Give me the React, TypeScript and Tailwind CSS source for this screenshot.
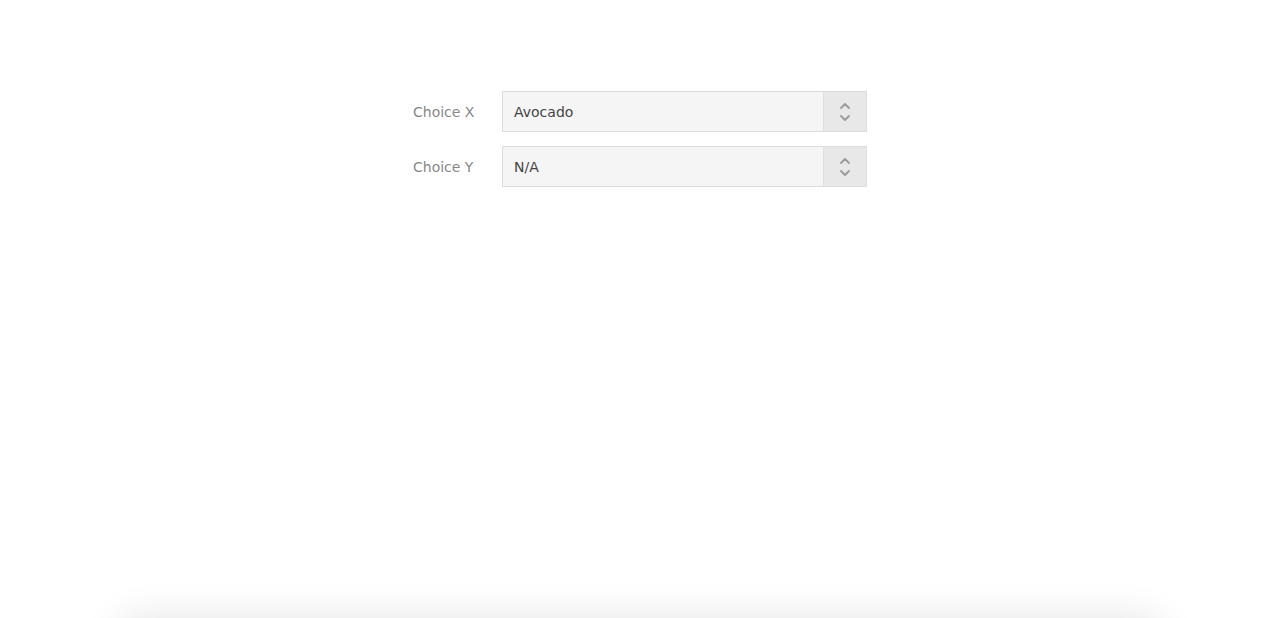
import React from "react"

const font = { fontFamily: '"DejaVu Sans", Verdana, sans-serif' }

function Chevrons() {
  return (
    <svg width="12" height="22" viewBox="0 0 12 22" fill="none" stroke="#9a9a9a" strokeWidth="1.8" strokeLinecap="round" strokeLinejoin="round">
      <path d="M2 7 L6 3 L10 7" />
      <path d="M2 15 L6 19 L10 15" />
    </svg>
  )
}

function SelectRow({ label, value }: { label: string; value: string }) {
  return (
    <div className="flex items-center">
      <label className="w-[89px] shrink-0 pt-[1px] text-[14px] text-[#888]">{label}</label>
      <div className="flex h-[41px] w-[365px] border border-[#dcdcdc] bg-[#f5f5f5]">
        <div className="flex flex-1 items-center pl-[11px] pt-[2px] text-[14px] text-[#444]">{value}</div>
        <div className="flex w-[43px] items-center justify-center border-l border-[#e0e0e0] bg-[#e8e8e8]">
          <Chevrons />
        </div>
      </div>
    </div>
  )
}

export default function App() {
  return (
    <div className="h-[618px] overflow-hidden bg-white" style={font}>
      <div className="flex justify-center pt-[91px]">
        <div className="flex flex-col gap-[14px]">
          <SelectRow label="Choice X" value="Avocado" />
          <SelectRow label="Choice Y" value="N/A" />
        </div>
      </div>
      <div className="mx-auto mt-[434px] h-[200px] w-[1040px] rounded-lg bg-white shadow-[0_0_40px_rgba(0,0,0,0.12)]" />
    </div>
  )
}
